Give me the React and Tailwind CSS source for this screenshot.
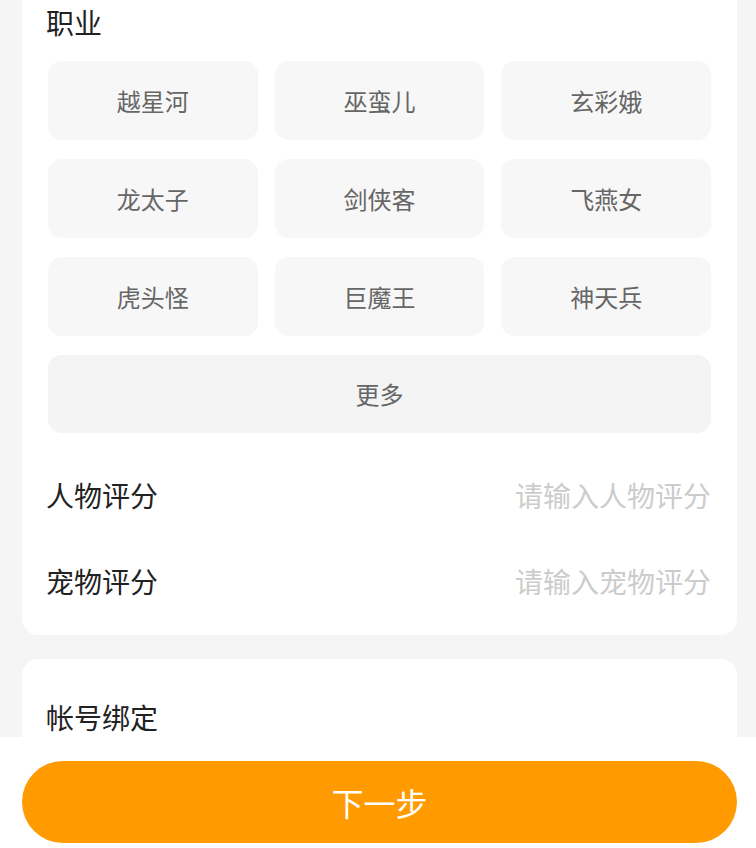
import React from "react";

const jobs = ["越星河", "巫蛮儿", "玄彩娥", "龙太子", "剑侠客", "飞燕女", "虎头怪", "巨魔王", "神天兵"];

export default function App() {
  return (
    <div
      className="flex h-[848px] w-[756px] flex-col overflow-hidden bg-[#f5f5f5]"
      style={{ fontFamily: '"Noto Sans CJK SC", "Noto Sans", sans-serif' }}
    >
      <div className="flex-1 overflow-hidden">
        <div className="ml-[22px] w-[715px] rounded-b-[16px] bg-white px-[26px] pt-[2px] pb-[11px]">
          <div className="-ml-[2px] text-[28px] leading-[40px] text-[#222]">职业</div>
          <div className="mt-[19px] grid grid-cols-3 gap-x-[17px] gap-y-[19px]">
            {jobs.map((j) => (
              <div
                key={j}
                className="flex h-[79px] items-center justify-center rounded-[14px] bg-[#f7f7f7] text-[24px] text-[#666]"
              >
                {j}
              </div>
            ))}
            <div className="col-span-3 flex h-[78px] items-center justify-center rounded-[14px] bg-[#f4f4f4] text-[24px] text-[#666]">
              更多
            </div>
          </div>
          <div className="mt-[19px] flex h-[86px] items-center justify-between">
            <span className="-ml-[2px] text-[28px] text-[#222]">人物评分</span>
            <span className="text-[28px] text-[#cccccc]">请输入人物评分</span>
          </div>
          <div className="flex h-[86px] items-center justify-between">
            <span className="-ml-[2px] text-[28px] text-[#222]">宠物评分</span>
            <span className="text-[28px] text-[#cccccc]">请输入宠物评分</span>
          </div>
        </div>
        <div className="ml-[22px] mt-[24px] h-[200px] w-[715px] rounded-t-[16px] bg-white px-[26px] pt-[38px]">
          <div className="-ml-[2px] text-[28px] leading-[40px] text-[#222]">帐号绑定</div>
        </div>
      </div>
      <div className="h-[111px] shrink-0 bg-white pt-[24px]">
        <div className="ml-[22px] flex h-[82px] w-[715px] items-center justify-center rounded-full bg-[#ff9b00] text-[32px] text-white">
          下一步
        </div>
      </div>
    </div>
  );
}
